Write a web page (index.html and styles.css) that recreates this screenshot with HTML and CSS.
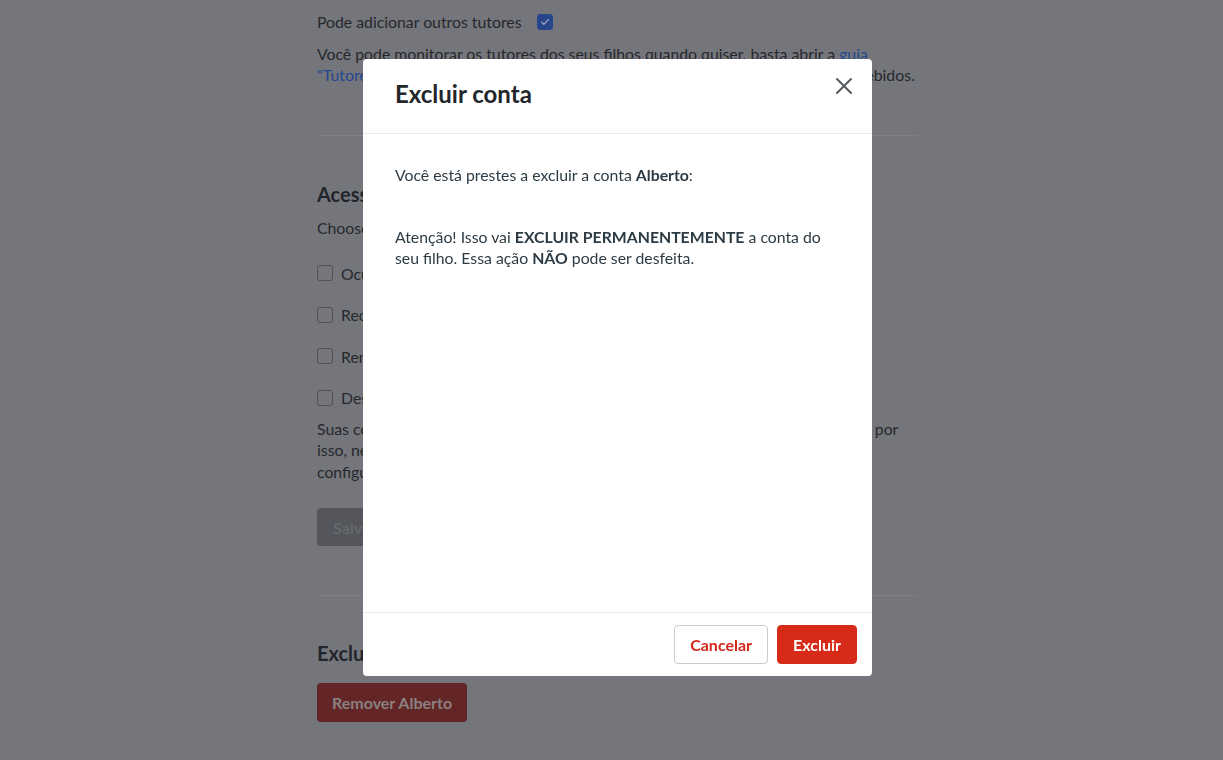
FILE: index.html
```html
<!DOCTYPE html>
<html lang="pt-BR">

<head>
    <meta charset="UTF-8" />
    <meta name="viewport" content="width=device-width, initial-scale=1" />
    <title>Excluir conta</title>
    <link rel="stylesheet" href="styles.css">
</head>

<body>
    <main class="pagina">
        <div class="linha-opcao">
            <span>Pode adicionar outros tutores</span>
            <span class="caixa marcada">
                <svg viewBox="0 0 16 16" width="12" height="12"><path d="M3.5 8.2l3 3 6-6.4" fill="none" stroke="currentColor" stroke-width="1.6" stroke-linecap="round" stroke-linejoin="round"/></svg>
            </span>
        </div>
        <p class="texto">Você pode monitorar os tutores dos seus filhos quando quiser, basta abrir a <a href="#">guia "Tutores"</a> e acompanhar os pedidos e convites de tutoria enviados, aceitos e recebidos.</p>

        <hr class="divisor">

        <section class="secao acesso">
            <h2>Acesso do aluno</h2>
            <p class="texto intro">Choose o que seu filho pode fazer na conta:</p>
            <label class="check"><span class="caixa"></span>Ocultar o chat com outros alunos</label>
            <label class="check"><span class="caixa"></span>Receber notificações por e-mail</label>
            <label class="check"><span class="caixa"></span>Remover acesso à loja de recompensas</label>
            <label class="check"><span class="caixa"></span>Desativar mensagens de outros tutores</label>
            <p class="texto aviso">Suas configurações valem apenas para a conta do seu filho em todos os tabletes, por isso, nem todas as mudanças aparecem imediatamente no aplicativo. Revise as configurações depois de salvar.</p>
            <button class="btn-salvar" disabled>Salvar alterações</button>
        </section>

        <hr class="divisor">

        <section class="secao exclusao">
            <h2>Excluir conta</h2>
            <button class="btn-remover">Remover Alberto</button>
        </section>
    </main>

    <div class="fundo-modal">
        <div class="modal" role="dialog" aria-labelledby="titulo-modal">
            <header class="modal-topo">
                <h1 id="titulo-modal">Excluir conta</h1>
                <button class="fechar" aria-label="Fechar">
                    <svg viewBox="0 0 20 20" width="20" height="20"><path d="M3 3l14 14M17 3L3 17" stroke="currentColor" stroke-width="2" stroke-linecap="round"/></svg>
                </button>
            </header>
            <div class="modal-corpo">
                <p>Você está prestes a excluir a conta <strong>Alberto</strong>:</p>
                <p>Atenção! Isso vai <strong>EXCLUIR PERMANENTEMENTE</strong> a conta do seu filho. Essa ação <strong>NÃO</strong> pode ser desfeita.</p>
            </div>
            <footer class="modal-rodape">
                <button class="btn btn-cancelar">Cancelar</button>
                <button class="btn btn-excluir">Excluir</button>
            </footer>
        </div>
    </div>
</body>

</html>
```

FILE: styles.css
```css
body {
    margin: 0;
    background: #75767b;
    font-family: Lato, "Open Sans", sans-serif;
    font-size: 15.8px;
    line-height: 21.5px;
    color: #26282d;
}

/* Página por trás do modal (já escurecida) */
.pagina {
    width: 601px;
    margin-left: 317px;
    padding-top: 11px;
}

.linha-opcao {
    display: flex;
    align-items: center;
    gap: 15px;
}

.caixa {
    flex: 0 0 auto;
    width: 14px;
    height: 14px;
    border: 1px solid #4f5157;
    border-radius: 3px;
    display: inline-flex;
    justify-content: center;
    align-items: center;
    box-sizing: content-box;
}

.caixa.marcada {
    background: #27468a;
    border-color: #27468a;
    color: #a3acc2;
}

.texto {
    margin: 10px 0 0 0;
}

.texto a {
    color: #24488f;
    text-decoration: none;
}

.divisor {
    border: none;
    border-top: 1px solid #7f8085;
    margin: 49px 0 0 0;
}

.secao h2 {
    margin: 0;
    font-size: 20px;
    font-weight: 700;
    color: #22252b;
}

.acesso h2 {
    margin-top: 48px;
}

.exclusao h2 {
    margin-top: 47px;
}

.secao .intro {
    margin: 12px 0 24px 0;
}

.secao .aviso {
    margin-top: 9px;
}

.check {
    display: flex;
    align-items: center;
    gap: 8px;
    margin-top: 20px;
}

.btn-salvar {
    margin-top: 26px;
    height: 38px;
    padding: 0 16px;
    border: none;
    border-radius: 4px;
    background: #54565b;
    color: #65686d;
    font-family: inherit;
    font-size: 16px;
    font-weight: 700;
}

/* Modal */
.fundo-modal {
    position: fixed;
    inset: 0;
}

.modal {
    position: absolute;
    left: 363px;
    top: 59px;
    width: 509px;
    height: 617px;
    background: #fff;
    border-radius: 4px;
    display: flex;
    flex-direction: column;
    color: #2d3b45;
}

.modal-topo {
    display: flex;
    justify-content: space-between;
    align-items: flex-start;
    padding: 0 18px 0 32px;
    height: 74px;
    border-bottom: 1px solid #e8eaec;
}

.modal-topo h1 {
    margin: 20px 0 0 0;
    font-size: 24px;
    font-weight: 700;
    line-height: 30px;
    color: #23262b;
}

.fechar {
    margin-top: 17px;
    background: none;
    border: none;
    padding: 0;
    width: 20px;
    height: 20px;
    color: #565a5f;
    cursor: pointer;
}

.modal-corpo {
    flex: 1;
    padding: 30px 32px;
}

.modal-corpo p {
    margin: 0 0 40px 0;
    color: #2d3b45;
}

.modal-rodape {
    display: flex;
    justify-content: flex-end;
    gap: 9px;
    padding: 12px 15px;
    border-top: 1px solid #e8eaec;
}

.btn {
    height: 39px;
    padding: 0 15px;
    border-radius: 4px;
    font-family: inherit;
    font-size: 16px;
    font-weight: 700;
    cursor: pointer;
}

.btn-cancelar {
    background: #fff;
    border: 1px solid #c7cdd1;
    color: #d5261c;
}

.btn-excluir {
    background: #d82a18;
    border: 1px solid #d82a18;
    color: #fff;
}

.btn-remover {
    margin-top: 18px;
    height: 39px;
    padding: 0 15px;
    border: none;
    border-radius: 4px;
    background: #632525;
    color: #8a8080;
    font-family: inherit;
    font-size: 16px;
    font-weight: 700;
}
```
